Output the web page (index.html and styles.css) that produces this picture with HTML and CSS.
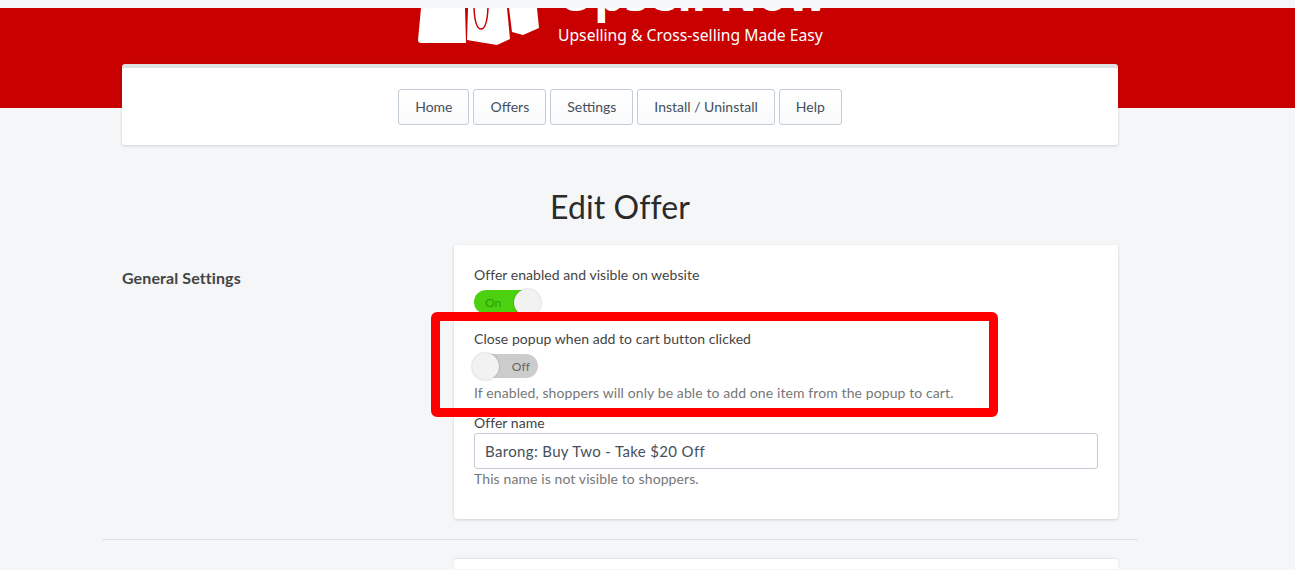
FILE: index.html
```html
<!DOCTYPE html>
<html lang="en">
<head>
	<meta charset="UTF-8">
	<title>Edit Offer</title>
	<link rel="stylesheet" href="styles.css">
</head>
<body>

<header class="banner">
	<div class="banner__logo">
		<svg class="banner__bags" width="125" height="40" viewBox="0 0 125 40">
			<path d="M6 0 L3 32 Q3 35 6 35 L51 35 L50 0 Z" fill="#fff"/>
			<path d="M53 0 L52 32 L82 37 L95 31 L92 0 Z" fill="#fff"/>
			<path d="M94 0 L97 24 L108 27 L124 20 L122 0 Z" fill="#fff"/>
			<path d="M59 0 Q60 21 66 21 Q72 21 73 0" fill="none" stroke="#c80000" stroke-width="1.5"/>
		</svg>
		<div class="banner__text">
			<div class="banner__title">Upsell Now</div>
			<div class="banner__tagline">Upselling &amp; Cross-selling Made Easy</div>
		</div>
	</div>
</header>

<div class="page">
	<nav class="menu">
		<a class="menu__btn">Home</a>
		<a class="menu__btn">Offers</a>
		<a class="menu__btn">Settings</a>
		<a class="menu__btn">Install / Uninstall</a>
		<a class="menu__btn">Help</a>
	</nav>

	<h1 class="heading">Edit Offer</h1>

	<section class="group">
		<h2 class="group__title">General Settings</h2>
		<div class="card">
			<div class="field field_switch">
				<label class="field__label">Offer enabled and visible on website</label>
				<div class="switch switch_on"><span class="switch__text">On</span><span class="switch__knob"></span></div>
			</div>
			<div class="field field_switch2">
				<label class="field__label">Close popup when add to cart button clicked</label>
				<div class="switch switch_off"><span class="switch__knob"></span><span class="switch__text">Off</span></div>
				<p class="field__hint field__hint_spaced">If enabled, shoppers will only be able to add one item from the popup to cart.</p>
			</div>
			<div class="field">
				<label class="field__label">Offer name</label>
				<input class="field__input" type="text" value="Barong: Buy Two - Take $20 Off">
				<p class="field__hint">This name is not visible to shoppers.</p>
			</div>
			<div class="callout"></div>
		</div>
	</section>

	<hr class="divider">

	<section class="group">
		<div class="group__title"></div>
		<div class="card card_next"></div>
	</section>
</div>

</body>
</html>
```

FILE: styles.css
```css
html, body {
	height: 570px;
	overflow: hidden;
}

body {
	margin: 0;
	padding-top: 8px;
	box-sizing: border-box;
	background: #f4f6f8;
	font-family: Lato, sans-serif;
	font-size: 14px;
	letter-spacing: 0.1px;
	color: #444;
}

.banner {
	height: 100px;
	background: #c80000;
	overflow: hidden;
}

.banner__logo {
	display: flex;
	padding-left: 415px;
	gap: 18px;
}

.banner__bags {
	display: block;
}

.banner__text {
	color: #fff;
	letter-spacing: 0;
	margin-top: -45px;
}

.banner__title {
	font-family: "Noto Sans", sans-serif;
	font-size: 48px;
	font-weight: 700;
	line-height: 60px;
	white-space: nowrap;
}

.banner__tagline {
	font-family: "Noto Sans", sans-serif;
	font-size: 15.7px;
	line-height: 22px;
	margin-top: 1px;
}

.page {
	width: 996px;
	margin: -44px 0 0 122px;
}

.menu {
	display: flex;
	justify-content: center;
	gap: 4px;
	box-sizing: border-box;
	height: 81px;
	padding-top: 21px;
	letter-spacing: 0;
	background: #fff;
	border-top: 4px solid #dfe2e2;
	border-radius: 3px;
	box-shadow: 0 1px 3px rgba(63, 63, 68, 0.2);
}

.menu__btn {
	box-sizing: border-box;
	height: 36px;
	padding: 0 16px;
	line-height: 34px;
	background: linear-gradient(#fff, #f9fafb);
	border: 1px solid #c4cdd5;
	border-radius: 3px;
	color: #454f5b;
}

.heading {
	margin: 41px 0 0;
	height: 59px;
	text-align: center;
	font-size: 32px;
	font-weight: 400;
	line-height: 42px;
	color: #2b2b2b;
}

.group {
	display: flex;
}

.group__title {
	width: 332px;
	margin: 0;
	padding-top: 23px;
	font-size: 16px;
	font-weight: 700;
	line-height: 20px;
	color: #444;
}

.group__title:empty {
	padding-top: 0;
}

.card {
	position: relative;
	width: 664px;
	height: 274px;
	box-sizing: border-box;
	padding: 20px;
	background: #fff;
	border-radius: 3px;
	box-shadow: 0 1px 3px rgba(63, 63, 68, 0.2);
}

.card_next {
	height: 10px;
	padding: 0;
	border-radius: 3px 3px 0 0;
	box-shadow: 0 -1px 2px rgba(63, 63, 68, 0.12);
}

.field__label {
	display: block;
	line-height: 20px;
	letter-spacing: 0.05px;
}

.field_switch {
	height: 64px;
}

.field_switch2 {
	height: 84px;
}

.field__hint {
	margin: 0;
	line-height: 20px;
	color: #777;
}

.field__hint_spaced {
	margin-top: 5px;
}

.field__input {
	display: block;
	width: 100%;
	box-sizing: border-box;
	height: 36px;
	padding: 0 10px;
	font: 15px/34px Lato, sans-serif;
	letter-spacing: 0.35px;
	color: #454f5b;
	background: #fff;
	border: 1px solid #c4cdd5;
	border-radius: 3px;
}

.switch {
	display: flex;
	align-items: center;
	justify-content: space-between;
	box-sizing: border-box;
	width: 64px;
	height: 24px;
	margin-top: 5px;
	border-radius: 12px;
	font-size: 12px;
}

.switch_on {
	background: #4bd10f;
	color: #2f9a0a;
	padding-left: 11px;
}

.switch_on .switch__knob {
	margin-right: -3px;
}

.switch_off {
	background: #cccccc;
	color: #666;
	padding-right: 8px;
}

.switch_off .switch__knob {
	margin-left: -2px;
}

.switch__knob {
	width: 27px;
	height: 27px;
	flex: none;
	border-radius: 50%;
	background: #f2f2f2;
	box-shadow: 0 0 2px rgba(0, 0, 0, 0.3);
}

.callout {
	position: absolute;
	left: -23px;
	top: 67px;
	width: 567px;
	height: 105px;
	box-sizing: border-box;
	border: 9px solid #ff0000;
	border-radius: 6px;
}

.divider {
	margin: 20px -20px 19px;
	border: 0;
	border-top: 1px solid #dfe3e8;
}
```
